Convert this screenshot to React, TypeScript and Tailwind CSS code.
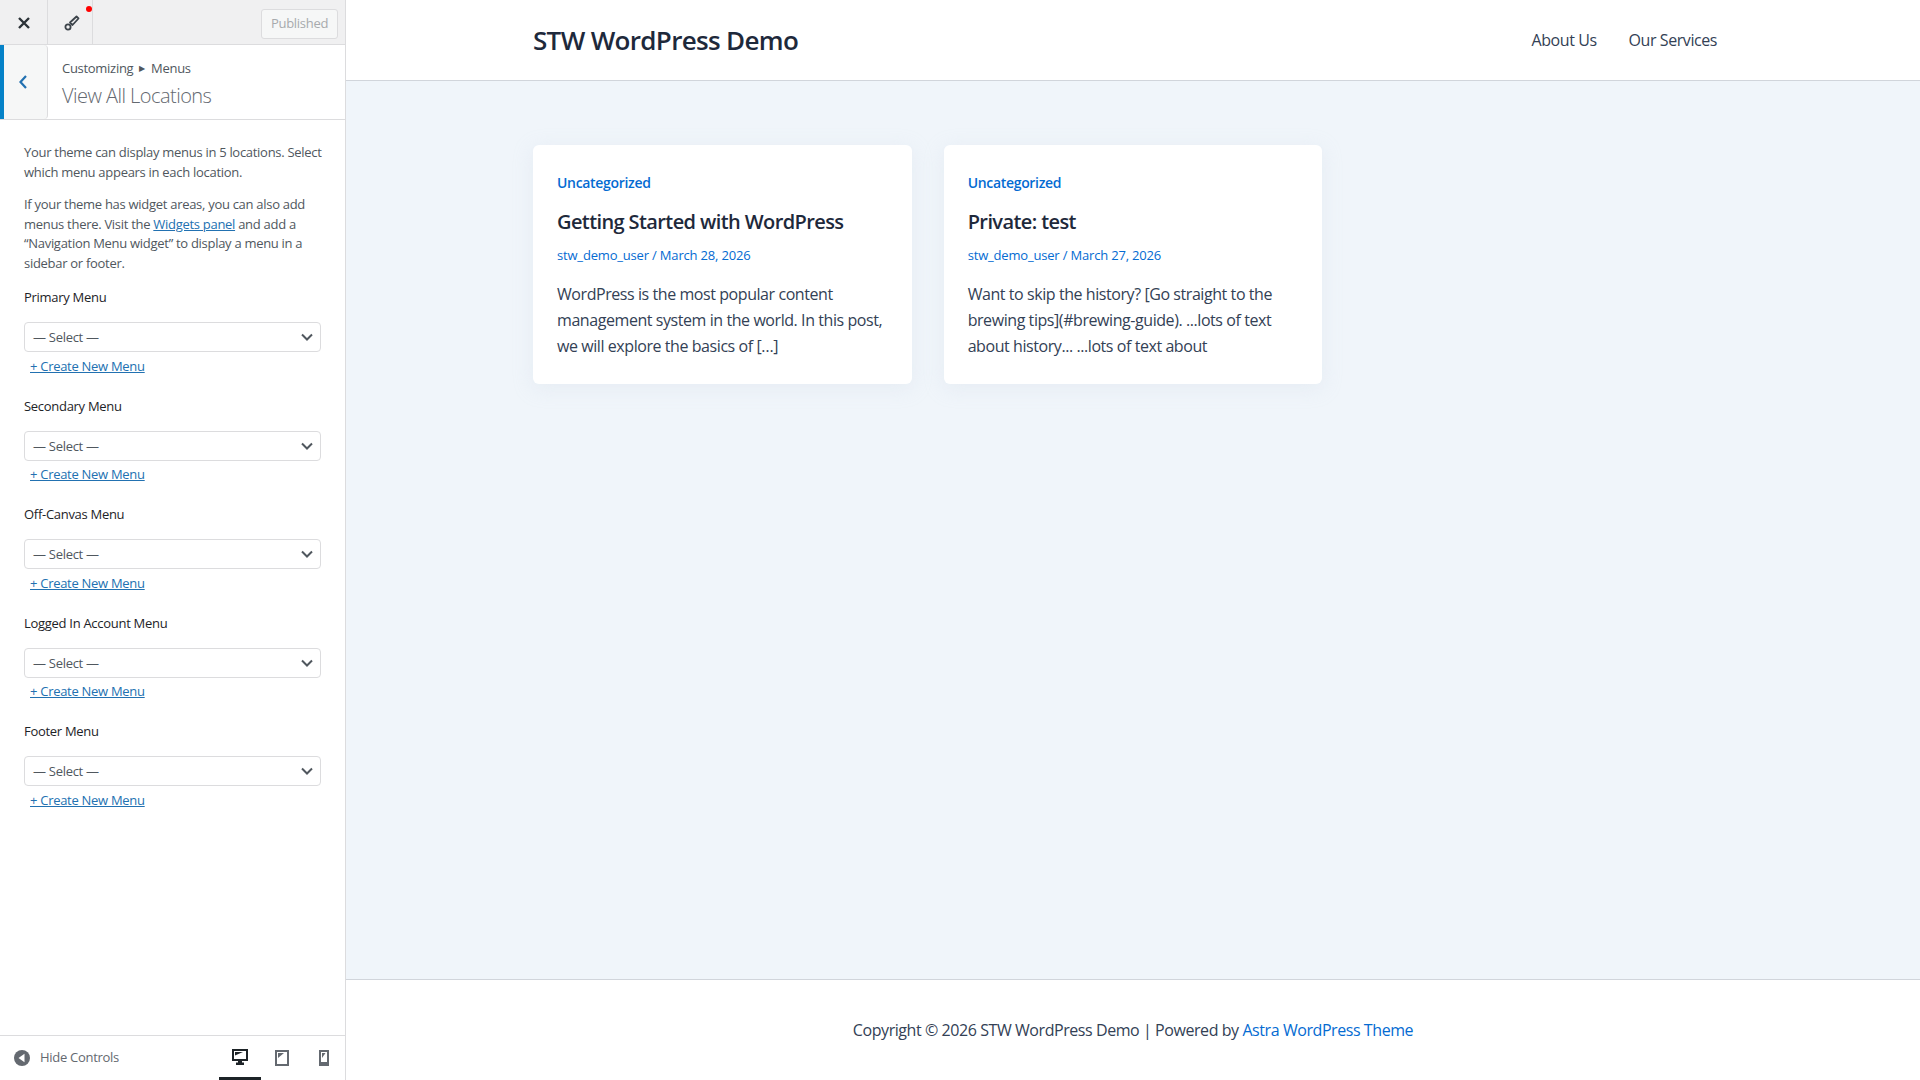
import type { ReactNode } from "react";

const LOCATIONS = ["Primary Menu", "Secondary Menu", "Off-Canvas Menu", "Logged In Account Menu", "Footer Menu"];

function MenuLocation({ label }: { label: string }) {
  return (
    <div className="mb-[20px]">
      <div className="mb-[15px] text-[13px] leading-[20px] text-[#1d2327]">{label}</div>
      <div className="relative h-[30px] w-[297px] rounded-[4px] border border-[#dcdcde] bg-white pl-[8px] text-[13px] leading-[28px] text-[#50575e]">
        — Select —
        <svg className="absolute right-[6px] top-[7px]" width="14" height="14" viewBox="0 0 14 14" fill="none">
          <path d="M2 4.5 7 9.5 12 4.5" stroke="#50575e" strokeWidth="2" />
        </svg>
      </div>
      <a className="mt-[3.5px] ml-[6px] block w-fit text-[13px] leading-[20px] text-[#2271b1] underline">+ Create New Menu</a>
    </div>
  );
}

function Card({ title, date, children }: { title: string; date: string; children: ReactNode }) {
  return (
    <article className="h-[239px] w-[378.67px] rounded-[6px] bg-white px-[24px] pt-[26px] shadow-[0_4px_20px_rgba(200,212,228,0.25)]">
      <div className="text-[14px] font-semibold leading-[24px] tracking-[-0.32px] text-[#046bd2]">Uncategorized</div>
      <h2 className="mt-[11px] text-[20px] font-semibold leading-[32px] tracking-[-0.6px] text-[#1e293b]">{title}</h2>
      <div className="mt-[7px] text-[13px] font-medium leading-[20px] tracking-[-0.18px] text-[#046bd2]">stw_demo_user / {date}</div>
      <p className="mt-[16px] text-[16px] leading-[26px] text-[#334155]">{children}</p>
    </article>
  );
}

export default function App() {
  return (
    <div className="flex h-screen w-full overflow-hidden font-['Open_Sans','Noto_Sans',sans-serif]">
      <aside className="flex w-[346px] shrink-0 flex-col border-r border-[#dcdcde] bg-white tracking-[-0.29px]">
        <div className="flex h-[45px] shrink-0 items-center border-b border-[#dcdcde] bg-[#f0f0f1]">
          <div className="flex h-full w-[48px] items-center justify-center border-r border-[#dcdcde] pt-[1px]">
            <svg width="14" height="14" viewBox="0 0 14 14" fill="none">
              <path d="M2 2 12 12M12 2 2 12" stroke="#2c3338" strokeWidth="2.4" />
            </svg>
          </div>
          <div className="relative flex h-full w-[45px] items-center justify-center border-r border-[#dcdcde] pl-[4px] pt-[2px]">
            <svg width="16" height="16" viewBox="0 0 16 16" fill="none">
              <path d="M6 7.5 12.5 1.5 14.5 3.5 8.5 10Z" stroke="#3c434a" strokeWidth="1.8" strokeLinejoin="round" />
              <circle cx="4" cy="12" r="2.6" stroke="#3c434a" strokeWidth="1.8" />
            </svg>
            <span className="absolute left-[38px] top-[6px] h-[6px] w-[6px] rounded-full bg-[#f00]" />
          </div>
          <div className="ml-auto mr-[7px] mt-[3px] flex h-[30px] w-[77px] items-center justify-center rounded-[3px] border border-[#dcdcde] bg-[#f6f7f7] text-[13px] text-[#a7aaad]">
            Published
          </div>
        </div>
        <div className="flex h-[75px] shrink-0 border-b border-[#dcdcde]">
          <div className="flex w-[48px] items-center justify-center rounded-r-[4px] border-r border-[#dcdcde] border-l-[4px] border-l-[#0582c8] bg-[#f6f7f7] pr-[5px]">
            <svg width="10" height="16" viewBox="0 0 10 16" fill="none">
              <path d="M8 2 2.5 8 8 14" stroke="#2271b1" strokeWidth="2.2" />
            </svg>
          </div>
          <div className="pl-[14px] pt-[13px]">
            <div className="flex items-center text-[13px] leading-[20px] text-[#50575e]">
              Customizing
              <span className="mx-[6px] text-[8px] leading-none">▶</span>
              Menus
            </div>
            <div className="mt-[3.5px] text-[20px] font-light leading-[28px] tracking-[-0.54px] text-[#646970]">View All Locations</div>
          </div>
        </div>
        <div className="flex-1 px-[24px] pt-[23px]">
          <p className="mb-[13px] -mr-[10px] text-[13px] leading-[19.5px] text-[#50575e]">
            Your theme can display menus in 5 locations. Select which menu appears in each location.
          </p>
          <p className="mb-[14px] text-[13px] leading-[19.5px] text-[#50575e]">
            If your theme has widget areas, you can also add menus there. Visit the{" "}
            <a className="text-[#2271b1] underline">Widgets panel</a> and add a “Navigation Menu widget” to display a menu in a sidebar or footer.
          </p>
          {LOCATIONS.map((label) => (
            <MenuLocation key={label} label={label} />
          ))}
        </div>
        <div className="flex h-[45px] shrink-0 items-center border-t border-[#dcdcde] pl-[14px]">
          <svg width="16" height="16" viewBox="0 0 16 16">
            <circle cx="8" cy="8" r="8" fill="#646970" />
            <path d="M10.5 3.8 4.5 8 10.5 12.2Z" fill="#fff" />
          </svg>
          <span className="ml-[10px] text-[13px] text-[#646970]">Hide Controls</span>
          <div className="ml-auto flex h-full">
            <div className="flex w-[42px] items-center justify-center border-b-[3px] border-b-[#1d2327]">
              <svg width="16" height="16" viewBox="0 0 16 16">
                <path d="M0 0h16v12h-6v1.5h2V16H4v-2.5h2V12H0Z" fill="#1d2327" />
                <path d="M2 2h12v8H2Z" fill="#fff" />
                <path d="M3 3h8L3 6.5Z" fill="#1d2327" />
              </svg>
            </div>
            <div className="flex w-[42px] items-center justify-center">
              <svg width="14" height="16" viewBox="0 0 14 16">
                <path d="M0 0h14v16H0Z" fill="#646970" />
                <path d="M2 2h10v12H2Z" fill="#fff" />
                <path d="M3 3h6L3 8Z" fill="#646970" />
              </svg>
            </div>
            <div className="flex w-[42px] items-center justify-center">
              <svg width="10" height="16" viewBox="0 0 10 16">
                <path d="M0 0h10v16H0Z" fill="#646970" />
                <path d="M2 2h6v10H2Z" fill="#fff" />
                <path d="M3 3h3.5L3 8Z" fill="#646970" />
              </svg>
            </div>
          </div>
        </div>
      </aside>

      <main className="flex min-w-0 flex-1 flex-col bg-[#f0f5fa] tracking-[-0.43px]">
        <header className="flex h-[81px] shrink-0 items-center justify-between border-b border-[#d1d5db] bg-white pl-[187px] pr-[203px]">
          <div className="text-[26px] font-semibold tracking-[-0.67px] text-[#1e293b]">STW WordPress Demo</div>
          <nav className="flex gap-[32px] text-[16px] text-[#334155]">
            <a>About Us</a>
            <a>Our Services</a>
          </nav>
        </header>
        <div className="flex flex-1 gap-[32px] pl-[187px] pt-[64px]">
          <Card title="Getting Started with WordPress" date="March 28, 2026">
            WordPress is the most popular content management system in the world. In this post, we will explore the basics of […]
          </Card>
          <Card title="Private: test" date="March 27, 2026">
            Want to skip the history? [Go straight to the brewing tips](#brewing-guide). ...lots of text about history... ...lots of text about
          </Card>
        </div>
        <footer className="flex h-[101px] shrink-0 items-center justify-center border-t border-[#d1d5db] bg-white text-[16px] text-[#334155]">
          <span>
            Copyright © 2026 STW WordPress Demo | Powered by <a className="text-[#046bd2]">Astra WordPress Theme</a>
          </span>
        </footer>
      </main>
    </div>
  );
}
